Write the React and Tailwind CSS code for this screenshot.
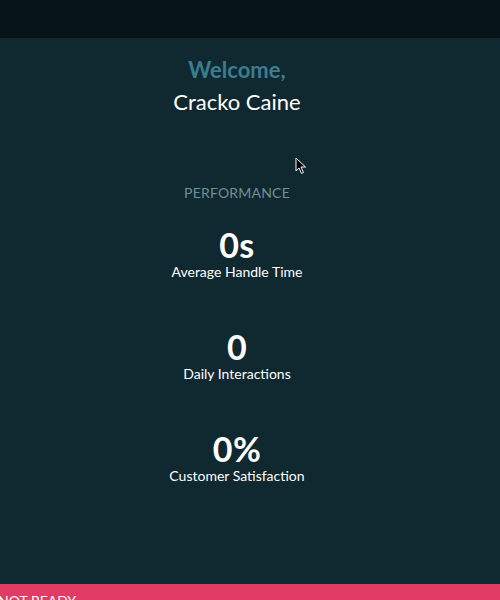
export default function App() {
  const stats = [
    ["0s", "Average Handle Time"],
    ["0", "Daily Interactions"],
    ["0%", "Customer Satisfaction"],
  ];
  return (
    <div className="relative w-[500px] h-[600px] overflow-hidden bg-[#10282f] flex flex-col" style={{ fontFamily: "Lato, 'Open Sans', sans-serif" }}>
      <div className="h-[38px] shrink-0 bg-[#061418]" />
      <div className="flex-1 flex flex-col items-center text-white pr-[26px]">
        <div className="mt-[19px] text-[22px] leading-[26px] font-bold text-[#3b7d8f]">Welcome,</div>
        <div className="mt-[6px] text-[22px] leading-[26px] text-white">Cracko Caine</div>
        <div className="mt-[69px] text-[14px] leading-[18px] text-[#6f9098] tracking-[0.2px]">PERFORMANCE</div>
        <div className="mt-[26px] flex flex-col items-center gap-[49px]">
          {stats.map(([v, l]) => (
            <div key={l} className="flex flex-col items-center">
              <div className="text-[34px] leading-[34px] font-bold tracking-[0.5px]">{v}</div>
              <div className="text-[14px] leading-[18px] mt-[1px]">{l}</div>
            </div>
          ))}
        </div>
      </div>
      <div className="h-[16px] shrink-0 bg-[#e23b65] overflow-hidden">
        <div className="ml-[-2px] mt-[9px] text-[14px] leading-[16px] text-white">NOT READY</div>
      </div>
      <svg className="absolute left-[295px] top-[157px]" width="12" height="18" viewBox="0 0 12 18">
        <path d="M1 1 L1 14 L4 11 L6.5 16.5 L8.5 15.5 L6 10 L10.5 10 Z" fill="#000" stroke="#fff" strokeWidth="1" />
      </svg>
    </div>
  );
}
